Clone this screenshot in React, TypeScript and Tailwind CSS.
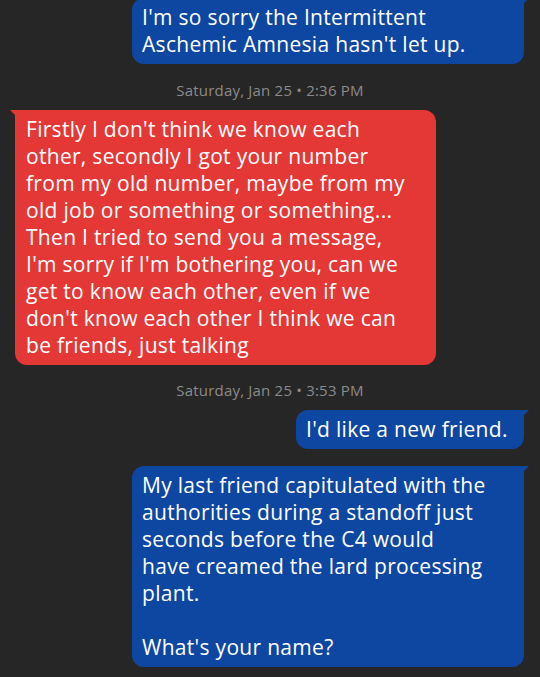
const font = { fontFamily: "'Open Sans', 'Noto Sans', sans-serif" };

const Tail = ({ side, color }: { side: "left" | "right"; color: string }) => (
    <svg
        width="6"
        height="6"
        viewBox="0 0 6 6"
        className={side === "left" ? "absolute -left-[5px] top-0" : "absolute -right-[5px] top-0"}
    >
        {side === "left" ? (
            <polygon points="0,0 6,0 6,6" fill={color} />
        ) : (
            <polygon points="0,0 6,0 0,6" fill={color} />
        )}
    </svg>
);

const Outgoing = ({ lines, width }: { lines: string[]; width: string }) => (
    <div className="flex justify-end pr-4">
        <div className={`relative bg-[#0e47a1] text-white rounded-xl rounded-tr-none px-[10px] py-[6px] ${width}`}>
            <Tail side="right" color="#0e47a1" />
            {lines.map((l, i) => (
                <div key={i} className="whitespace-pre h-[27px] leading-[27px]">{l}</div>
            ))}
        </div>
    </div>
);

const Stamp = ({ text }: { text: string }) => (
    <div className="text-center text-[15px] tracking-[0.2px] leading-5 text-[#8b8b8b]">{text}</div>
);

export default function App() {
    return (
        <div className="w-[540px] h-[677px] bg-[#262626] overflow-hidden flex flex-col justify-end pb-[10px] text-[21px] tracking-[0.3px]" style={font}>
            <Outgoing
                width="w-[392px]"
                lines={["I'm so sorry the Intermittent", "Aschemic Amnesia hasn't let up."]}
            />

            <div className="mt-4 mb-[10px]">
                <Stamp text="Saturday, Jan 25 • 2:36 PM" />
            </div>

            <div className="flex pl-[15px]">
                <div className="relative w-[421px] bg-[#e33836] text-white rounded-xl rounded-tl-none px-[11px] py-[6px]">
                    <Tail side="left" color="#e33836" />
                    {[
                        "Firstly I don't think we know each",
                        "other, secondly I got your number",
                        "from my old number, maybe from my",
                        "old job or something or something...",
                        "Then I tried to send you a message,",
                        "I'm sorry if I'm bothering you, can we",
                        "get to know each other, even if we",
                        "don't know each other I think we can",
                        "be friends, just talking",
                    ].map((l, i) => (
                        <div key={i} className="whitespace-pre h-[27px] leading-[27px]">{l}</div>
                    ))}
                </div>
            </div>

            <div className="mt-[15px] mb-[10px]">
                <Stamp text="Saturday, Jan 25 • 3:53 PM" />
            </div>

            <Outgoing width="w-[228px]" lines={["I'd like a new friend."]} />

            <div className="mt-[17px]">
                <Outgoing
                    width="w-[392px]"
                    lines={[
                        "My last friend capitulated with the",
                        "authorities during a standoff just",
                        "seconds before the C4 would",
                        "have creamed the lard processing",
                        "plant.",
                        "",
                        "What's your name?",
                    ]}
                />
            </div>
        </div>
    );
}
